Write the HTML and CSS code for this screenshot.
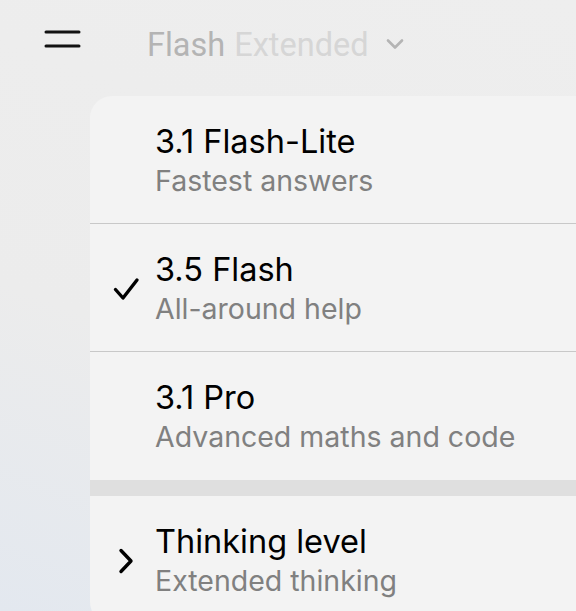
FILE: index.html
```html
<!DOCTYPE html>
<html lang="en">
<head>
  <meta charset="UTF-8" />
  <title>Model picker</title>
  <link rel="stylesheet" href="styles.css">
</head>
<body>
  <header class="top-bar">
    <svg class="menu-icon" width="38" height="18" viewBox="0 0 38 18">
      <path d="M2 2h33M2 16h33" stroke="#111" stroke-width="3" stroke-linecap="round"/>
    </svg>
    <div class="model-title">
      <span class="model-name">Flash</span>
      <span class="model-mode">Extended</span>
      <svg class="title-chevron" width="18" height="12" viewBox="0 0 18 12">
        <path d="M2 2.5l7 7 7-7" fill="none" stroke="#b4b4b4" stroke-width="2.6" stroke-linecap="round" stroke-linejoin="round"/>
      </svg>
    </div>
  </header>

  <div class="menu">
    <div class="menu-item">
      <span class="item-mark"></span>
      <div class="item-text">
        <div class="item-title">3.1 Flash-Lite</div>
        <div class="item-sub">Fastest answers</div>
      </div>
    </div>
    <div class="menu-item">
      <span class="item-mark">
        <svg width="28" height="26" viewBox="0 0 28 26">
          <path d="M3.5 13.5l7.5 8.5L25 4" fill="none" stroke="#000" stroke-width="3.4" stroke-linecap="round" stroke-linejoin="round"/>
        </svg>
      </span>
      <div class="item-text">
        <div class="item-title">3.5 Flash</div>
        <div class="item-sub">All-around help</div>
      </div>
    </div>
    <div class="menu-item">
      <span class="item-mark"></span>
      <div class="item-text">
        <div class="item-title">3.1 Pro</div>
        <div class="item-sub">Advanced maths and code</div>
      </div>
    </div>
    <div class="menu-gap"></div>
    <div class="menu-item">
      <span class="item-mark">
        <svg width="18" height="28" viewBox="0 0 18 28">
          <path d="M4 3.5l10 10.5-10 10.5" fill="none" stroke="#000" stroke-width="3.4" stroke-linecap="round" stroke-linejoin="round"/>
        </svg>
      </span>
      <div class="item-text">
        <div class="item-title">Thinking level</div>
        <div class="item-sub">Extended thinking</div>
      </div>
    </div>
  </div>
</body>
</html>
```

FILE: styles.css
```css
html, body {
  height: 100%;
}

body {
  margin: 0;
  overflow: hidden;
  font-family: Inter, "Noto Sans", sans-serif;
  background: linear-gradient(20deg, #e3e8ef 0%, #ececec 40%, #eeeeee 100%);
}

.top-bar {
  display: flex;
  align-items: flex-start;
  height: 96px;
  padding: 25px 0 0 44px;
  box-sizing: border-box;
}

.menu-icon {
  margin-top: 5px;
}

.model-title {
  display: flex;
  align-items: center;
  margin-left: 65px;
  height: 40px;
  line-height: 40px;
  font-family: Roboto, Inter, sans-serif;
  font-size: 32.5px;
}

.model-name {
  color: #b4b4b4;
}

.model-mode {
  color: #d6d6d6;
  margin-left: 9px;
}

.title-chevron {
  margin-left: 17px;
  margin-top: -2px;
}

.menu {
  margin-left: 90px;
  width: 540px;
  background: #f3f3f3;
  border-radius: 22px;
  overflow: hidden;
}

.menu-item {
  display: flex;
  align-items: center;
  height: 128px;
  border-bottom: 1px solid #c8c8c8;
  box-sizing: border-box;
}

.menu-item:nth-child(3),
.menu-item:last-child {
  border-bottom: none;
}

.menu-gap {
  height: 16px;
  background: #dfdfdf;
}

.item-mark {
  width: 65px;
  display: flex;
  justify-content: center;
  padding: 2px 0 0 6px;
  box-sizing: border-box;
}

.item-text {
  padding-top: 4px;
}

.item-title {
  font-size: 32.5px;
  color: #000;
  line-height: 38px;
}

.item-sub {
  font-size: 28.5px;
  color: #808080;
  line-height: 40px;
}
```
